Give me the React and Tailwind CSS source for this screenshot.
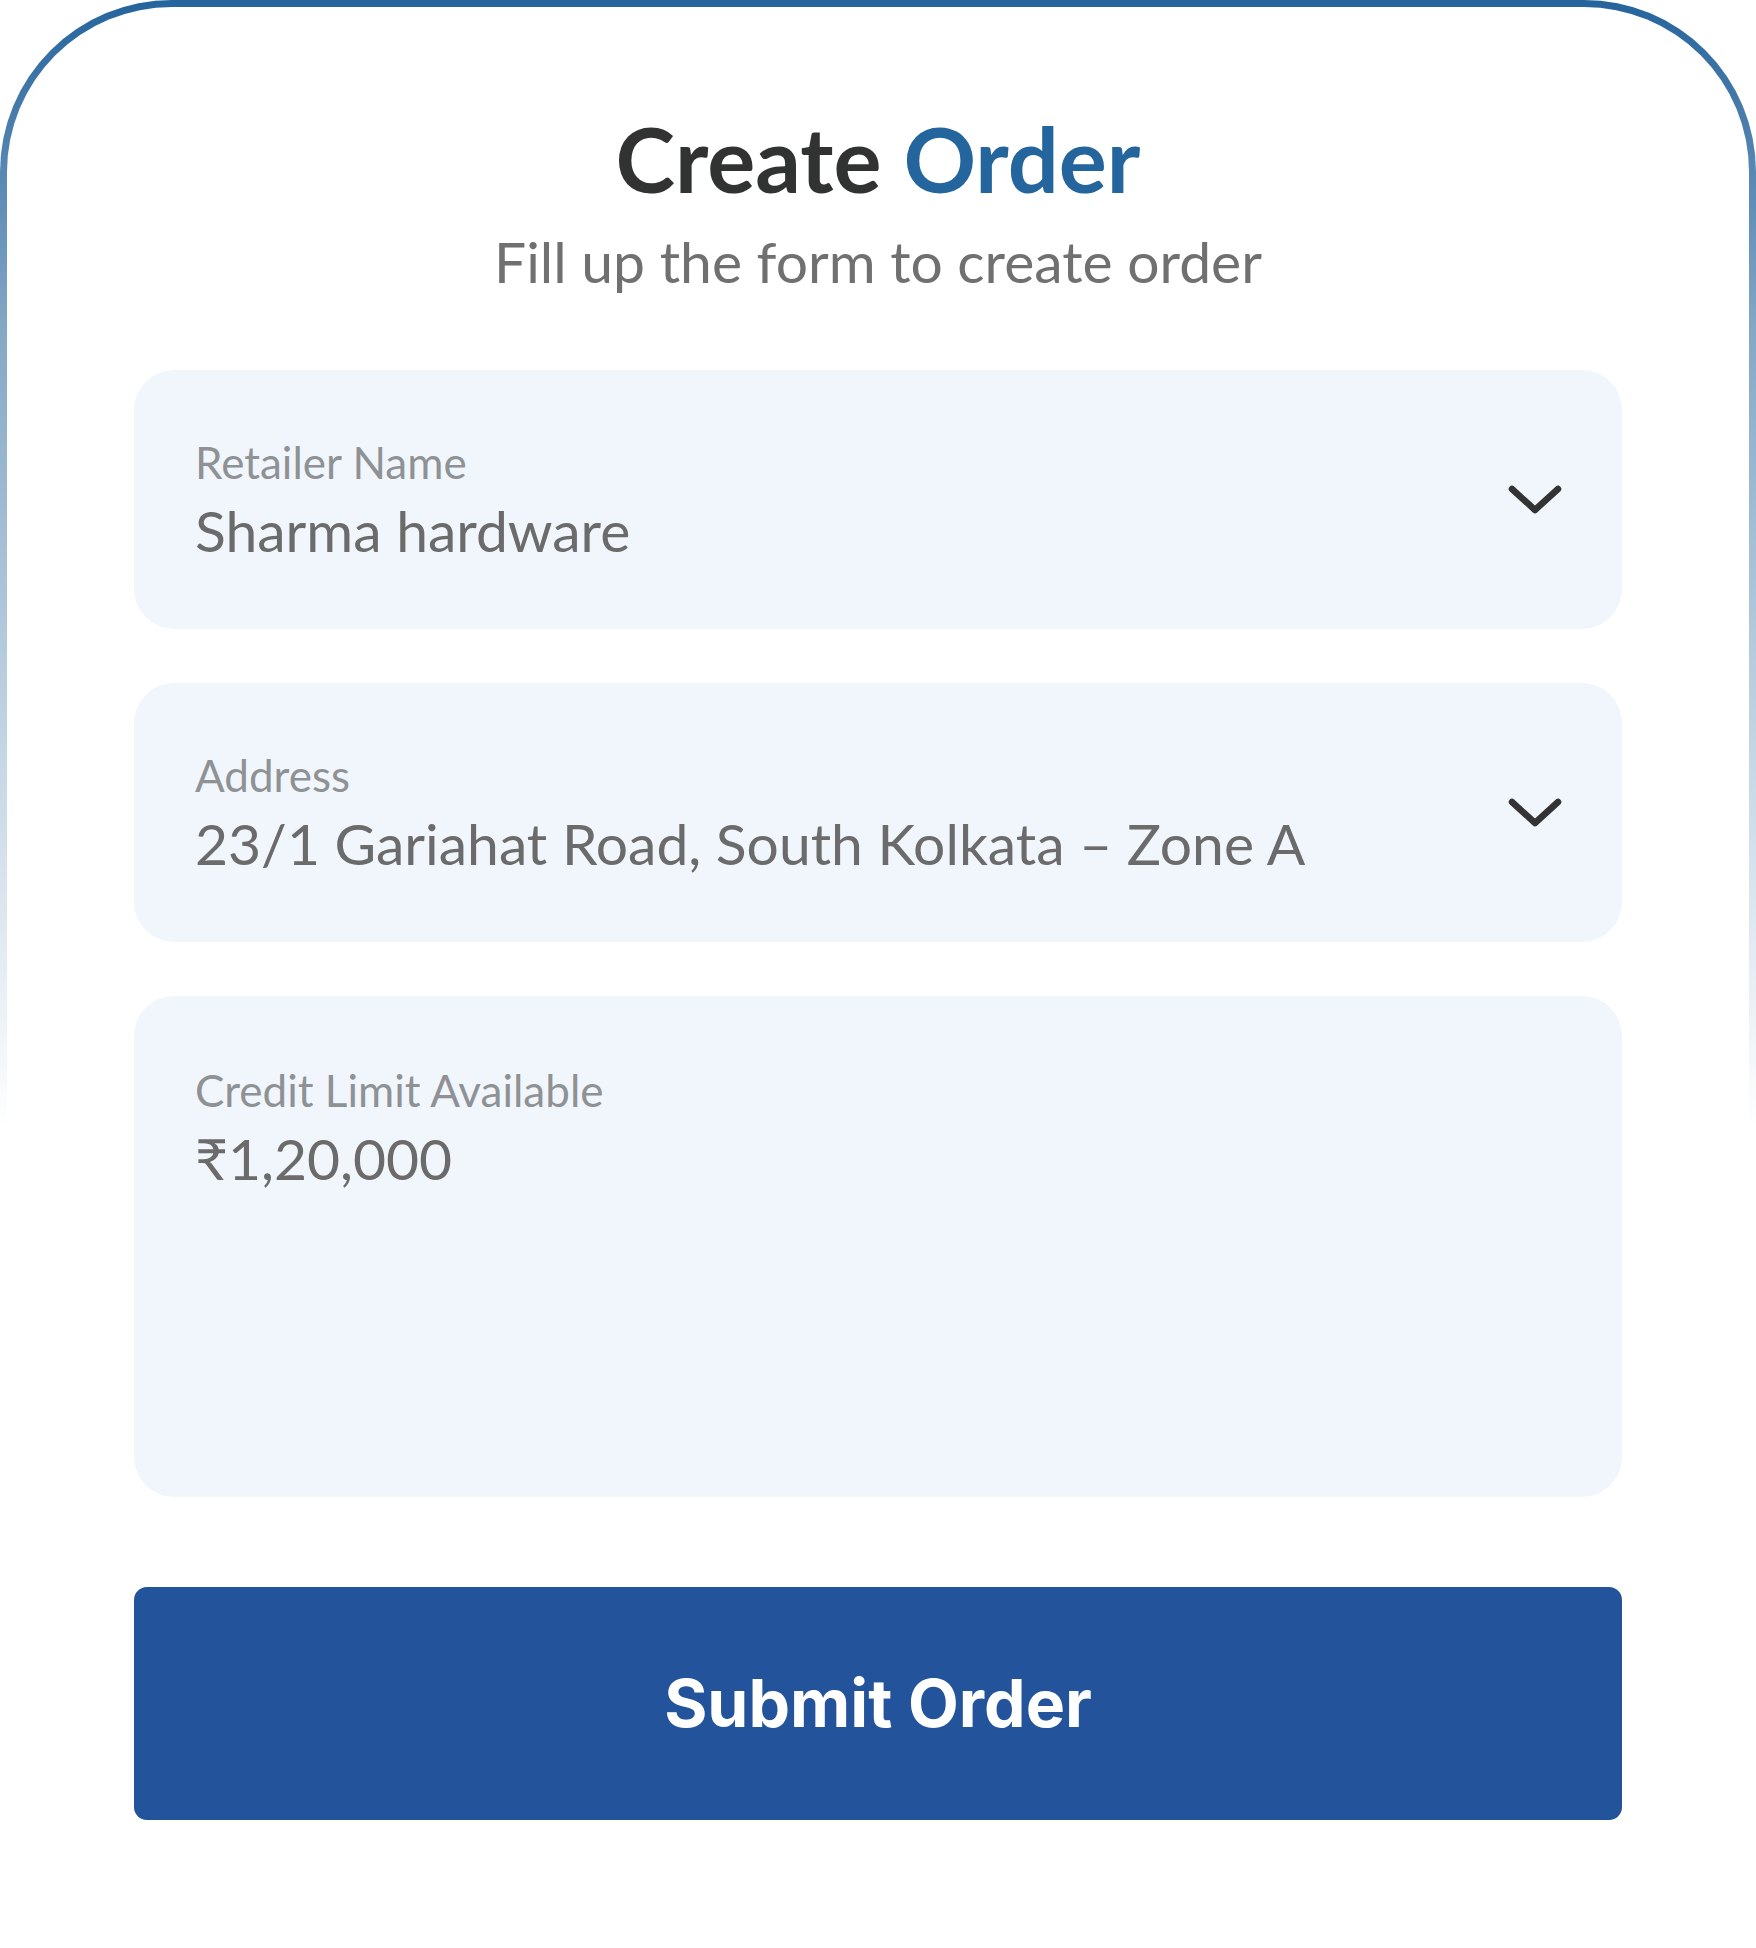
import React from 'react';

function Chevron() {
  return (
    <svg width="54" height="30" viewBox="0 0 54 30" fill="none" className="shrink-0">
      <path d="M4 4 L27 25 L50 4" stroke="#333333" strokeWidth="6.5" strokeLinecap="round" strokeLinejoin="round" />
    </svg>
  );
}

function SelectField({ label, value }) {
  return (
    <div className="flex h-[259px] items-center justify-between rounded-[40px] bg-[#f1f6fd] pl-[61px] pr-[60px]">
      <div className="flex flex-col gap-[18px]">
        <span className="text-[44px] leading-none text-[#8f9295]">{label}</span>
        <span className="text-[57px] leading-none text-[#6b6b6b]">{value}</span>
      </div>
      <Chevron />
    </div>
  );
}

export default function App() {
  return (
    <div className="min-h-[1948px] bg-white font-['Lato',sans-serif]">
      <div className="min-h-[1948px] rounded-t-[172px] bg-gradient-to-b from-[#24649c] via-[#85a8c6] via-[17%] to-white to-[58%] px-[7px] pt-[7px]">
        <div className="flex min-h-[1941px] flex-col items-center rounded-t-[165px] bg-white pt-[106px]">
          <h1 className="text-[90px] font-bold leading-none text-[#313333]">
            Create <span className="text-[#25659e]">Order</span>
          </h1>
          <p className="mt-[30px] text-[57px] leading-none text-[#707070]">Fill up the form to create order</p>

          <div className="mt-[80px] flex w-[1488px] flex-col gap-[54px]">
            <SelectField label="Retailer Name" value="Sharma hardware" />
            <SelectField label="Address" value="23/1 Gariahat Road, South Kolkata – Zone A" />
            <div className="h-[501px] rounded-[40px] bg-[#f1f6fd] pl-[61px] pt-[72px]">
              <div className="flex flex-col gap-[18px]">
                <span className="text-[44px] leading-none text-[#8f9295]">Credit Limit Available</span>
                <span className="text-[57px] leading-none text-[#6b6b6b]">₹1,20,000</span>
              </div>
            </div>
          </div>

          <button className="mt-[90px] flex h-[233px] w-[1488px] items-center justify-center rounded-[13px] bg-[#23539a] font-['Inter',sans-serif] text-[66px] font-bold text-white">
            Submit Order
          </button>
        </div>
      </div>
    </div>
  );
}
